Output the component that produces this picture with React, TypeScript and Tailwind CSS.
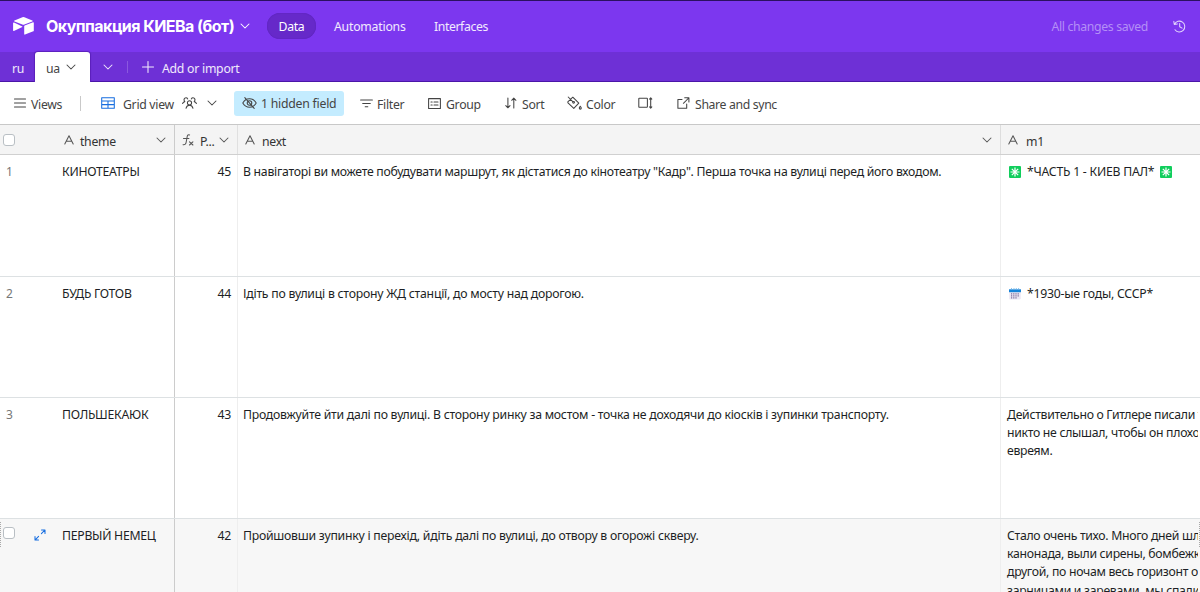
import clsx from 'clsx'
import type { ReactNode } from 'react'

const ROWS = [
  {
    theme: 'КИНОТЕАТРЫ',
    points: 45,
    next: 'В навігаторі ви можете побудувати маршрут, як дістатися до кінотеатру "Кадр". Перша точка на вулиці перед його входом.',
    nextClass: 'tracking-[-0.27px]',
    mark: 'sparkle',
    m1: ['*ЧАСТЬ 1 - КИЕВ ПАЛ*'],
  },
  {
    theme: 'БУДЬ ГОТОВ',
    points: 44,
    next: 'Ідіть по вулиці в сторону ЖД станції, до мосту над дорогою.',
    nextClass: 'tracking-[-0.23px]',
    mark: 'calendar',
    m1: ['*1930-ые годы, СССР*'],
  },
  {
    theme: 'ПОЛЬШЕКАЮК',
    points: 43,
    next: 'Продовжуйте йти далі по вулиці. В сторону ринку за мостом - точка не доходячи до кіосків і зупинки транспорту.',
    nextClass: 'tracking-[-0.24px]',
    m1: ['Действительно о Гитлере писали так,', 'никто не слышал, чтобы он плохо', 'евреям.'],
  },
  {
    theme: 'ПЕРВЫЙ НЕМЕЦ',
    points: 42,
    next: 'Пройшовши зупинку і перехід, йдіть далі по вулиці, до отвору в огорожі скверу.',
    nextClass: 'tracking-[-0.24px]',
    m1: ['Стало очень тихо. Много дней шла', 'канонада, выли сирены, бомбежки', 'другой, по ночам весь горизонт о', 'зарницами и заревами, мы спали'],
    hover: true,
  },
]

function Icon({ w, h, className, children }: { w: number; h: number; className?: string; children: ReactNode }) {
  return (
    <svg width={w} height={h} viewBox={`0 0 ${w} ${h}`} fill="none" stroke="currentColor" strokeWidth="1.05" strokeLinecap="round" strokeLinejoin="round" className={clsx('shrink-0', className)}>
      {children}
    </svg>
  )
}

function Chevron({ className }: { className?: string }) {
  return (
    <Icon w={10} h={6} className={className}>
      <path d="M1 1l4 4 4-4" />
    </Icon>
  )
}

function TextIcon({ className }: { className?: string }) {
  return (
    <Icon w={10} h={10} className={className}>
      <path d="M.8 9L5 .8 9.2 9M2.4 6.2h5.2" />
    </Icon>
  )
}

function Sparkle() {
  return (
    <svg width="12" height="12" viewBox="0 0 12 12" className="shrink-0">
      <rect width="12" height="12" rx="1" fill="#10ce5c" />
      <path d="M6 1.5v9M1.5 6h9M2.8 2.8l6.4 6.4M9.2 2.8L2.8 9.2" stroke="#fff" strokeWidth="1.2" />
    </svg>
  )
}

function Calendar() {
  return (
    <svg width="12" height="12" viewBox="0 0 12 12" className="shrink-0">
      <path d="M.3 3h11.4v7.8l-.8.8H.8l-.5-.6z" fill="#ece6f3" />
      <path d="M0 1.3h12v2.9H0z" fill="#1683d8" />
      <path d="M2.5 0v2M5 0v2M7.3 0v2M9.6 0v2" stroke="#6bb4e8" strokeWidth=".8" />
      <path d="M2 5.9h8M2 7.9h8M2 9.9h6" stroke="#7d6c9c" strokeWidth="1.1" strokeDasharray="1.2 1" />
    </svg>
  )
}

function Header() {
  return (
    <header className="flex h-[52px] items-center border-t border-[#2b1061] bg-[#7c37ef] pb-px pl-[13px] text-white">
      <svg width="21" height="18" viewBox="0 0 21 18" fill="#fff" className="shrink-0">
        <path d="M9.4.3a2.6 2.6 0 0 1 2 0l7.9 3.1c.6.3.6.8 0 1.1l-7.9 3.1c-.7.3-1.4.3-2 0L1.5 4.5c-.6-.3-.6-.8 0-1.1z" />
        <path d="M11.2 9.2v7.9c0 .4.4.6.8.5l8.3-3.3c.3-.1.5-.3.5-.6V5.8c0-.4-.4-.7-.8-.5l-8.3 3.2c-.3.2-.5.4-.5.7z" />
        <path d="M9.3 9.4L1 5.6c-.4-.2-.9 0-.9.5v7.5c0 .4.4.6.8.4l8.4-4c.3-.2.3-.5 0-.6z" />
      </svg>
      <h1 className="ml-[12px] w-[188px] whitespace-nowrap font-['Inter','Liberation_Sans',sans-serif] text-[16px] font-bold tracking-[-0.54px]">Окуппакция КИЕВа (бот)</h1>
      <Chevron className="-mt-px ml-[6px]" />
      <nav className="ml-[17px] flex items-center">
        <span className="flex h-[26px] w-[49px] items-center justify-center rounded-full bg-[#6629c9] pt-[2px] shadow-[inset_0_0_1px_#4a1a9e]">Data</span>
        <span className="ml-[18px] w-[71px] whitespace-nowrap pt-[3px] tracking-[-0.22px] text-white/90">Automations</span>
        <span className="ml-[29px] whitespace-nowrap pt-[3px] tracking-[-0.4px] text-white/90">Interfaces</span>
      </nav>
      <span className="ml-auto mr-[25px] whitespace-nowrap pt-[3px] tracking-[-0.33px] text-[#b48ff6]">All changes saved</span>
      <Icon w={13} h={13} className="mr-[14px] text-[#e2d4fc]">
        <path d="M1.5 4.2A5.4 5.4 0 1 1 2 9.7M.8 1.4l.5 3 3-.5M6.700 3.400v3.300l2.400 1.400" />
      </Icon>
    </header>
  )
}

function TableTabs() {
  return (
    <div className="flex h-[30px] items-center border-b border-[#4a16a8] bg-[#6e30d6] text-white/90">
      <span className="w-[35px] pl-[12px] pt-[5px]">ru</span>
      <div className="-mb-px flex h-[30px] w-[55px] items-center rounded-t-[3px] bg-white pl-[11px] pt-[5px] text-[#444] shadow-[0_0_1px_1px_#5a20bb]">
        ua
        <Chevron className="-mt-[5px] ml-[6px]" />
      </div>
      <Chevron className="ml-[13px]" />
      <span className="ml-[14px] h-[12px] w-px bg-[#8b58df]" />
      <Icon w={12} h={12} className="ml-[14px]">
        <path d="M6 .5v11M.5 6h11" />
      </Icon>
      <span className="ml-[8px] whitespace-nowrap pt-[5px] tracking-[-0.25px]">Add or import</span>
    </div>
  )
}

function Toolbar() {
  return (
    <div className="relative flex h-[43px] items-center whitespace-nowrap border-b border-[#c8c8c8] bg-white pl-[14px] text-[#444]">
      <Icon w={12} h={10}>
        <path d="M.5 1h11M.5 5h11M.5 9h11" />
      </Icon>
      <span className="ml-[5px] w-[31px] pt-[4px]">Views</span>
      <span className="ml-[18px] h-[15px] w-px bg-[#c9c9c9]" />
      <Icon w={14} h={12} className="ml-[20px] text-[#176ee0]">
        <path d="M.7.7h12.6v10.6H.7zM.7 4h12.6M.7 7.6h12.6M7 4v7.3" />
      </Icon>
      <span className="ml-[8px] w-[51px] pt-[4px]">Grid view</span>
      <Icon w={15} h={12} className="ml-[8px]">
        <circle cx="7.5" cy="5.8" r="2.1" />
        <path d="M4 11.3c.5-2 1.8-3 3.5-3s3 1 3.5 3M.6 6.5c.5-1.2 1.2-1.7 2.2-1.8M14.4 6.5c-.5-1.2-1.2-1.7-2.2-1.8M2.8 4.6C1.2 2.8 2.4.8 4 .8c.9 0 1.4.5 1.7 1.1M12.2 4.6c1.6-1.8.4-3.8-1.2-3.8-.9 0-1.4.5-1.7 1.1" />
      </Icon>
      <Chevron className="ml-[10px]" />
      <button className="ml-[17px] flex h-[25px] w-[110px] items-center rounded-[3px] bg-[#c4ecff] pl-[8px]">
        <Icon w={15} h={12}>
          <path d="M.8 6C2.4 3.2 4.7 1.8 7.5 1.8S12.6 3.2 14.2 6c-1.6 2.8-3.9 4.2-6.7 4.2S2.4 8.8.8 6zM2.8.6l9.4 10.8" />
          <circle cx="7.5" cy="6" r="2.3" />
        </Icon>
        <span className="ml-[4px] pt-[3px] tracking-[-0.23px]">1 hidden field</span>
      </button>
      <Icon w={13} h={9} className="ml-[16px]">
        <path d="M.6 1h11.8M2.7 4.4h7.6M5.2 7.8h2.6" />
      </Icon>
      <span className="ml-[4px] w-[28px] pt-[4px]">Filter</span>
      <Icon w={13} h={11} className="ml-[23px]">
        <path d="M.6.6h11.8v9.8H.6zM3 4h1.2M6 4h4M3 7h1.2M6 7h4" />
      </Icon>
      <span className="ml-[5px] w-[34px] pt-[4px]">Group</span>
      <Icon w={12} h={12} className="ml-[25px]">
        <path d="M2.9 1v9.6M.8 8.6l2.1 2.2L5 8.6M8.8 11V1.2M6.7 3.3l2.1-2.2 2.1 2.2" />
      </Icon>
      <span className="ml-[5px] w-[23px] pt-[4px]">Sort</span>
      <Icon w={15} h={14} className="ml-[22px]">
        <path d="M1.2 1l4.8 4.8M3.5 3.3L5.8 1.2l6 6-5 5.2L1 6.8l-.2-1zM13.3 10.2c.7.9 1 1.4 1 1.9a1 1 0 0 1-2 0c0-.5.4-1 1-1.900z" />
        <circle cx="6.6" cy="6.3" r=".9" />
      </Icon>
      <span className="ml-[4px] w-[30px] pt-[4px]">Color</span>
      <Icon w={15} h={12} className="ml-[22px]">
        <rect x=".8" y="1.3" width="8.6" height="9" rx=".5" />
        <path d="M12.7 1v10M11.6 2.2l1.1-1.3 1.1 1.3M11.6 9.8l1.1 1.3 1.1-1.3" />
      </Icon>
      <Icon w={13} h={12} className="ml-[24px]">
        <path d="M5 2.4H.9v8.8h8.8V7M7.7.8h4.2V5M11.7 1L6.4 6.3" />
      </Icon>
      <span className="ml-[5px] pt-[4px] tracking-[-0.35px]">Share and sync</span>
    </div>
  )
}

function Checkbox() {
  return <span className="block h-[12px] w-[12px] shrink-0 rounded-[3px] border-[1.5px] border-[#b9bfc4] bg-white" />
}

function ColumnHeader() {
  return (
    <div className="flex h-[30px] border-b border-[#d0d0d0] bg-[#f4f4f4] text-[#333]">
      <div className="flex w-[175px] shrink-0 items-center border-r border-[#ccc] pl-[3px]">
        <Checkbox />
        <TextIcon className="ml-[49px] text-[#555]" />
        <span className="ml-[6px] pt-[5px]">theme</span>
        <Chevron className="ml-auto mr-[8px] text-[#555]" />
      </div>
      <div className="flex w-[63px] shrink-0 items-center border-r border-[#e0e0e0] pl-[7px]">
        <Icon w={12} h={12} className="text-[#555]">
          <path d="M7.6.9c-1.4-.5-2.1.2-2.4 1.6l-1.1 6C3.8 10.2 3 11 1 10.8M1.5 4.5h5.4M7.5 7.8l3.4 3.2M10.9 7.8L7.5 11" />
        </Icon>
        <span className="ml-[6px] pt-[5px]">P...</span>
        <Chevron className="ml-auto mr-[8px] text-[#555]" />
      </div>
      <div className="flex w-[763px] shrink-0 items-center border-r border-[#ddd] pl-[7px]">
        <TextIcon className="text-[#555]" />
        <span className="ml-[7px] pt-[5px]">next</span>
        <Chevron className="ml-auto mr-[8px] text-[#555]" />
      </div>
      <div className="flex items-center pl-[7px]">
        <TextIcon className="text-[#555]" />
        <span className="ml-[8px] pt-[5px]">m1</span>
      </div>
    </div>
  )
}

function Grid() {
  return (
    <div className="leading-[18.2px] tracking-[-0.2px] text-[#1d1f25]">
      {ROWS.map((row, i) => (
        <div key={row.theme} className={clsx('relative flex whitespace-nowrap border-b border-[#dde1e3]', i === 0 ? 'h-[122px]' : 'h-[121px]', row.hover ? 'bg-[#f7f7f7]' : 'bg-white')}>
          <div className="flex w-[175px] shrink-0 border-r border-[#ccc] pt-[8px]">
            {row.hover ? (
              <div className="flex w-[62px]">
                <span className="ml-[3px]"><Checkbox /></span>
                <Icon w={12} h={12} className="ml-[19px] mt-[2px] text-[#176ee0]">
                  <path d="M7.5 1H11v3.5M10.8 1.2L7.4 4.6M1 7.5V11h3.5M1.2 10.8l3.4-3.4" />
                </Icon>
              </div>
            ) : (
              <span className="w-[62px] pl-[6px] text-[12px] text-[#777]">{i + 1}</span>
            )}
            <span className="tracking-[-0.27px]">{row.theme}</span>
          </div>
          <div className="w-[63px] shrink-0 border-r border-[#eee] pr-[6px] pt-[8px] text-right">{row.points}</div>
          <div className="w-[763px] shrink-0 border-r border-[#eee] pl-[5px] pt-[8px]">
            <span className={row.nextClass}>{row.next}</span>
          </div>
          <div className="mr-[2px] min-w-0 flex-1 overflow-hidden pl-[6px] pt-[8px] tracking-[-0.3px]">
            {row.mark ? (
              <div className="flex items-center pl-[2px]">
                {row.mark === 'sparkle' ? <Sparkle /> : <Calendar />}
                <span className="mx-[6px] tracking-[-0.24px]">{row.m1[0]}</span>
                {row.mark === 'sparkle' && <Sparkle />}
              </div>
            ) : (
              row.m1.map((line) => <p key={line}>{line}</p>)
            )}
          </div>
          {row.hover && (
            <>
              <span className="absolute left-0 top-[3px] h-[25px] border-l border-dotted border-[#aaa]" />
              <span className="absolute right-0 top-[3px] h-[25px] border-l border-dotted border-[#aaa]" />
            </>
          )}
        </div>
      ))}
    </div>
  )
}

export default function App() {
  return (
    <div className="h-[592px] w-[1200px] overflow-hidden bg-white font-['Noto_Sans','Open_Sans',sans-serif] text-[12.25px] tracking-[-0.3px]">
      <Header />
      <TableTabs />
      <Toolbar />
      <ColumnHeader />
      <Grid />
    </div>
  )
}
